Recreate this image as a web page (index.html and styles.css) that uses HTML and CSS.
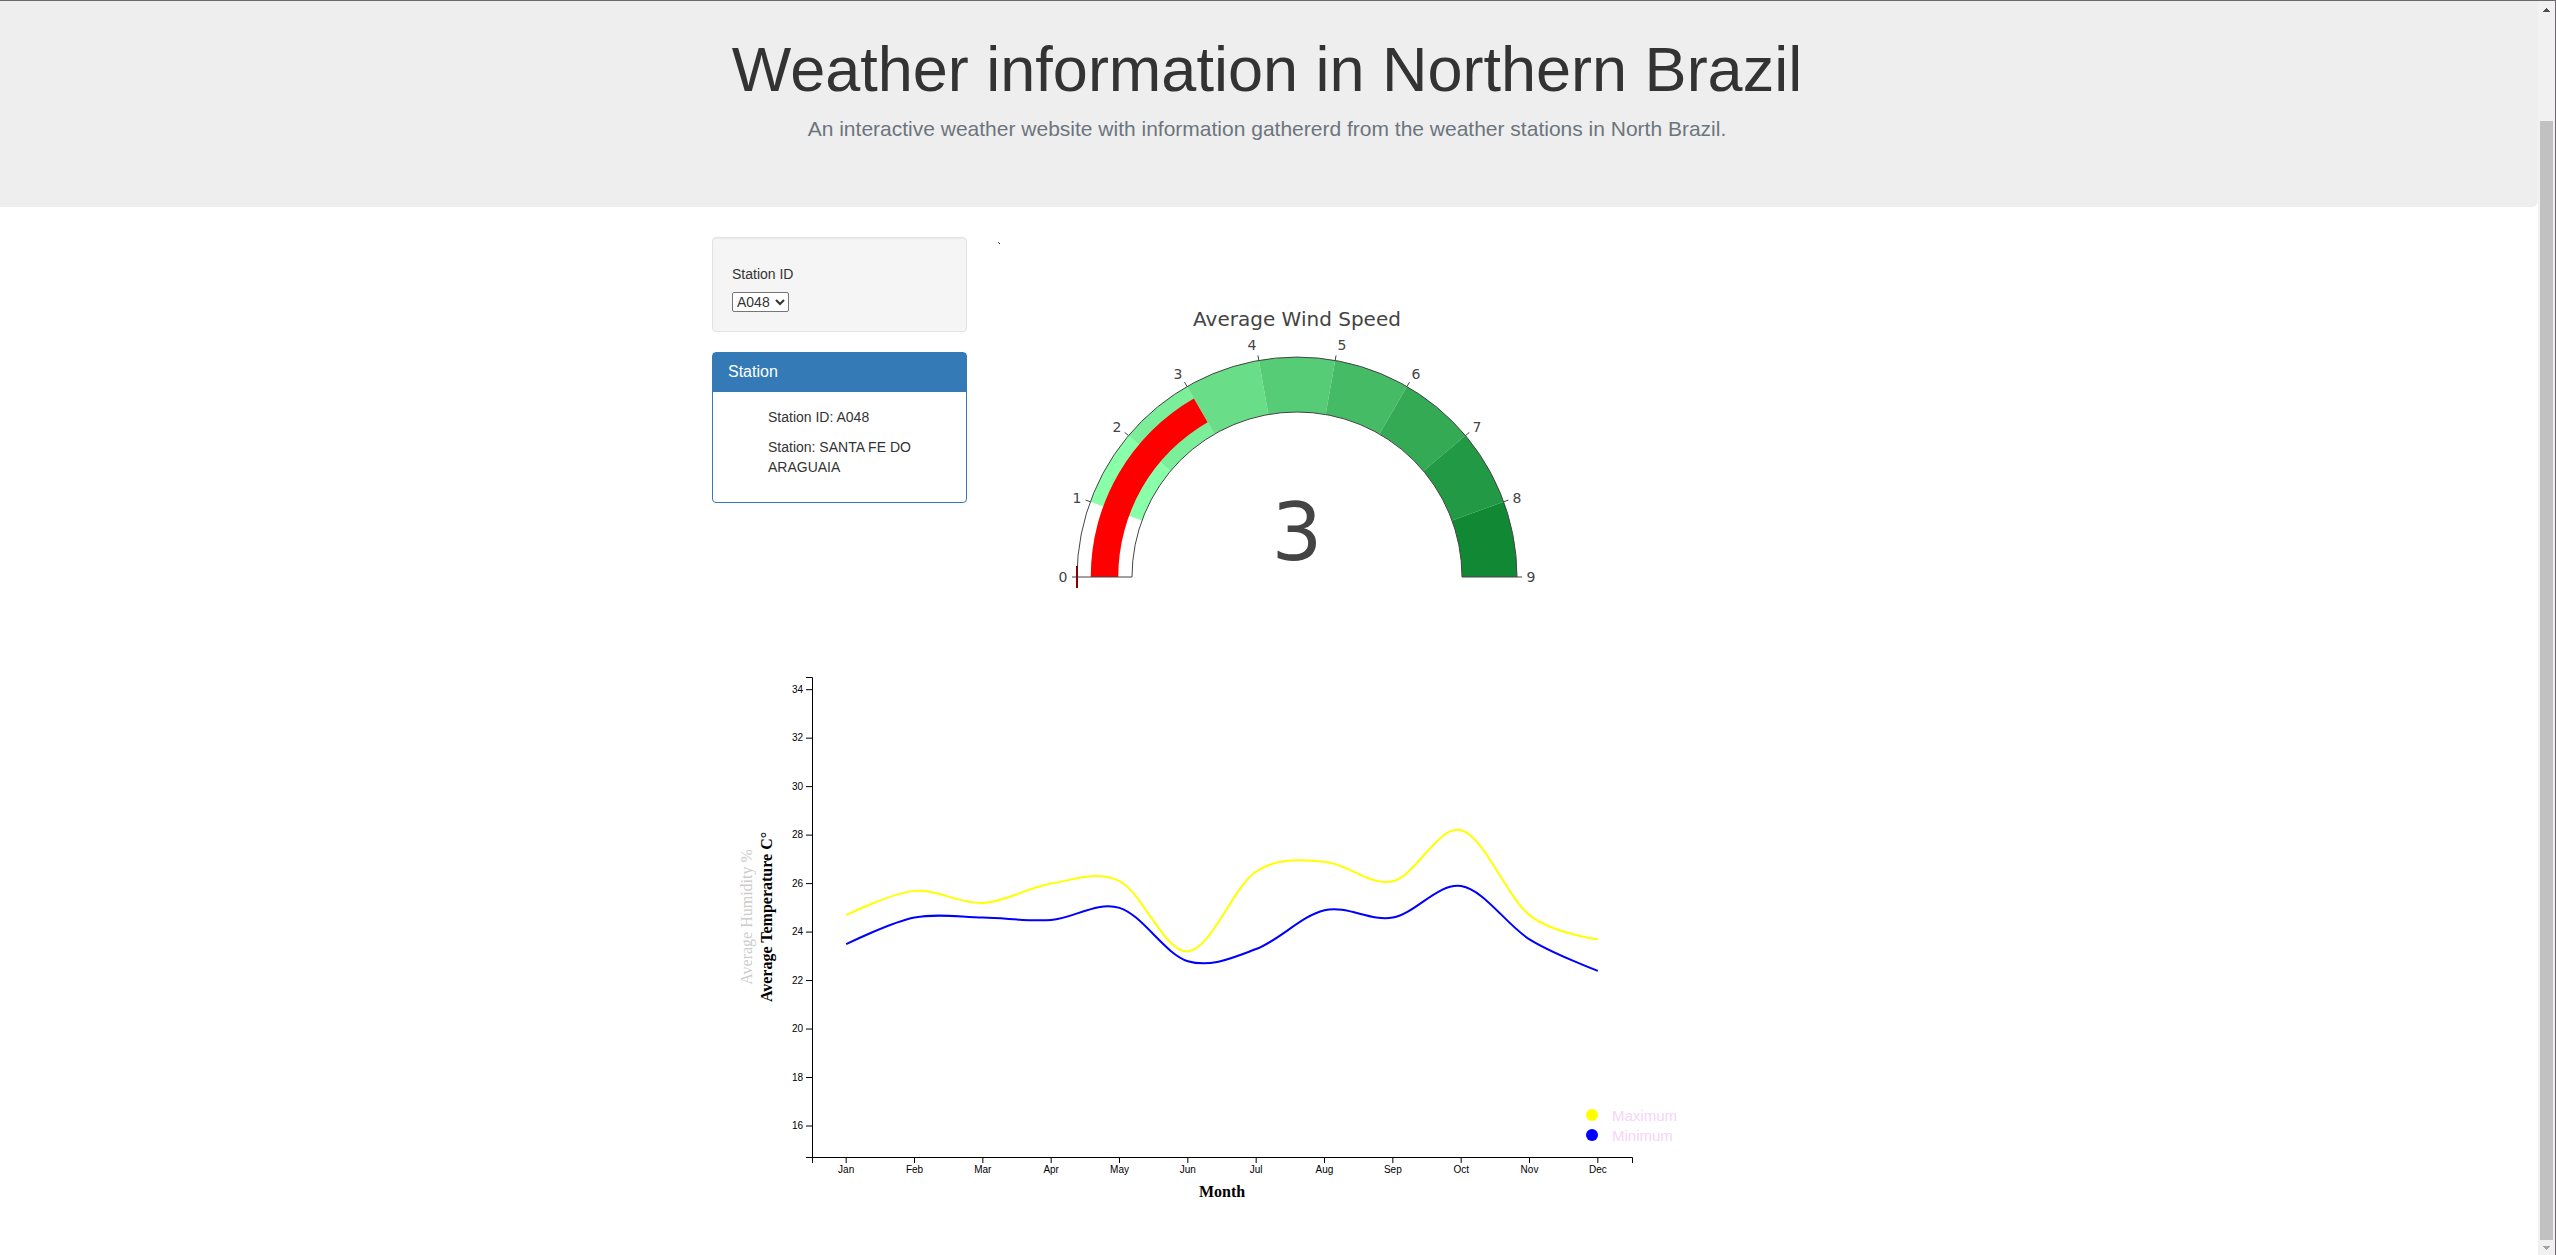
FILE: index.html
```html
<!DOCTYPE html>
<html lang="en">
<head>
<meta charset="utf-8">
<title>Weather information in Northern Brazil</title>
<link rel="stylesheet" href="styles.css">
</head>
<body>
<div class="page">
  <header class="jumbotron">
    <h1>Weather information in Northern Brazil</h1>
    <p>An interactive weather website with information gathererd from the weather stations in North Brazil.</p>
  </header>
  <main class="container">
    <div class="row">
      <aside class="sidebar">
        <form class="well">
          <label for="station">Station ID</label>
          <select id="station"><option>A048</option></select>
        </form>
        <section class="panel">
          <h3 class="panel-heading">Station</h3>
          <div class="panel-body">
            <p>Station ID: A048</p>
            <p>Station: SANTA FE DO ARAGUAIA</p>
          </div>
        </section>
      </aside>
      <div class="gauge-column">
        <svg class="speck" viewBox="0 0 2 2" width="2" height="2"><rect width="1" height="1" fill="#555"/><rect x="1" y="1" width="1" height="1" fill="#222"/></svg>
        <svg id="gauge" class="gauge" viewBox="0 0 600 400" width="600" height="400" role="img" aria-label="Average Wind Speed"></svg>
      </div>
    </div>
    <svg id="chart" class="chart" viewBox="0 0 1000 580" width="1000" height="580" role="img" aria-label="Average temperature by month"></svg>
  </main>
</div>
<div class="scrollbar" aria-hidden="true">
  <svg viewBox="0 0 7 4" width="7" height="4"><path d="M3 0h1v1h1v1h1v1h1v1H0V3h1V2h1V1h1z" fill="#505050"/></svg>
  <div class="thumb"></div>
  <svg viewBox="0 0 7 4" width="7" height="4"><path d="M0 0h7v1H6v1H5v1H4v1H3V3H2V2H1V1H0z" fill="#a3a3a3"/></svg>
</div>
<script src="charts.js"></script>
</body>
</html>
```
FILE: styles.css
```css
* { box-sizing: border-box; }
body {
  margin: 0;
  min-height: 100vh;
  display: flex;
  border-top: 1px solid #6b696b;
  background: #fff;
  color: #333;
  font: 14px/20px "Liberation Sans", Arial, sans-serif;
}
.page { flex: 1; min-width: 0; }
.jumbotron {
  padding: 33px 4px 63px 0;
  margin-bottom: 30px;
  background: #eee;
  border-radius: 0 0 6px 0;
  text-align: center;
}
.jumbotron h1 {
  margin: 0 0 10px;
  font-size: 63px;
  font-weight: 500;
  line-height: 70px;
}
.jumbotron p { margin: 0; font-size: 21px; line-height: 30px; color: #6c757d; }
.container { width: 100%; max-width: 1144px; margin: 0 auto; padding: 0 19px 0 15px; }
.row { display: flex; gap: 30px; }
.sidebar { width: 255px; }
.well {
  margin: 0 0 20px;
  padding: 26px 19px 19px;
  border: 1px solid #e3e3e3;
  border-radius: 4px;
  background: #f5f5f5;
  box-shadow: inset 0 1px 1px rgba(0, 0, 0, .05);
}
.well label { display: block; margin-bottom: 8px; }
.well select {
  display: block;
  height: 20px;
  width: 57px;
  padding: 0;
  font: inherit;
  color: #333;
  background: #fff;
  border: 1px solid #767676;
  border-radius: 2px;
}
.panel { border: 1px solid #337ab7; border-radius: 4px; }
.panel-heading {
  margin: 0;
  padding: 9px 15px 11px;
  background: #337ab7;
  color: #fff;
  font-size: 16px;
  font-weight: 500;
  line-height: 19px;
}
.panel-body { padding: 15px 15px 15px 55px; }
.panel-body p { margin: 0 0 10px; }
.gauge-column { display: flex; flex-direction: column; padding-top: 5px; }
.speck { margin: 0 0 13px 1px; }
.gauge, .chart { display: block; }
.gauge { font-family: Verdana, "DejaVu Sans", sans-serif; fill: #444; text-anchor: middle; }
.gauge-title { font-size: 20px; }
.gauge-tick { font-size: 14px; }
.gauge-value { font-size: 80px; }
.outline { fill: none; stroke: #444; }
.axis { fill: none; stroke: #000; }
.tick-label { font-size: 10px; fill: #000; }
.axis-title { font: 16px "Liberation Serif", "Times New Roman", serif; text-anchor: middle; }
.active { font-weight: 700; fill: #000; }
.inactive { fill: #ccc; }
.legend { font-size: 15px; fill: #f5d5f8; }
.line { fill: none; stroke-width: 2; }
.scrollbar {
  width: 18px;
  display: flex;
  flex-direction: column;
  align-items: center;
  padding: 7px 2px 5px 1px;
  background: #f1f1f1;
  border-right: 1px solid #6b696b;
}
.scrollbar svg { flex: none; }
.thumb { width: 13px; flex: 1; margin: 109px 0 6px; background: #c1c1c1; }
```
FILE: charts.js
```js
const NS = 'http://www.w3.org/2000/svg';

function add(parent, name, attrs, text) {
  const node = document.createElementNS(NS, name);
  for (const key in attrs) node.setAttribute(key, attrs[key]);
  if (text !== undefined) node.textContent = text;
  parent.appendChild(node);
  return node;
}

// Gauge
const gauge = document.getElementById('gauge');
const cx = 300, cy = 320, outer = 220, inner = 165, max = 9;
const polar = (value, r) => {
  const a = Math.PI * (1 - value / max);
  return [cx + r * Math.cos(a), cy - r * Math.sin(a)];
};
const band = (from, to, r1, r2) =>
  `M${polar(from, r1)}A${r1} ${r1} 0 0 1 ${polar(to, r1)}L${polar(to, r2)}A${r2} ${r2} 0 0 0 ${polar(from, r2)}Z`;
const colors = ['#fff', '#8affaa', '#7aee99', '#69dd88', '#57cc77', '#46bb66', '#34aa55', '#229944', '#118833'];
// Label centres, measured outwards and upwards from the hub
const labels = [[234, 0], [220, 79], [180, 150], [119, 203], [45, 232]];

colors.forEach((fill, i) => add(gauge, 'path', { d: band(i, i + 1, outer, inner), fill }));
add(gauge, 'path', { d: band(0, 3, 206.25, 178.75), fill: 'red' });
add(gauge, 'path', { d: band(0, max, outer, inner), class: 'outline' });
for (let i = 0; i <= max; i++) {
  add(gauge, 'path', { d: `M${polar(i, outer)}L${polar(i, outer + 5)}`, class: 'outline' });
  const [dx, dy] = labels[Math.min(i, max - i)];
  add(gauge, 'text', { x: cx + (i < 5 ? -dx : dx), y: cy - dy + 5, class: 'gauge-tick' }, i);
}
add(gauge, 'path', { d: `M${cx - outer} ${cy - 11}v22`, stroke: '#850000', 'stroke-width': 2 });
add(gauge, 'text', { x: cx, y: 69, class: 'gauge-title' }, 'Average Wind Speed');
add(gauge, 'text', { x: cx, y: 303, class: 'gauge-value' }, 3);

// Temperature chart
const chart = document.getElementById('chart');
const left = 100, top0 = 20, width = 820, height = 480;
const months = ['Jan', 'Feb', 'Mar', 'Apr', 'May', 'Jun', 'Jul', 'Aug', 'Sep', 'Oct', 'Nov', 'Dec'];
const series = [
  ['Maximum', 'yellow', [24.7, 25.7, 25.2, 26, 26.1, 23.2, 26.5, 26.9, 26.1, 28.2, 24.7, 23.7]],
  ['Minimum', 'blue', [23.5, 24.6, 24.6, 24.5, 25, 22.8, 23.3, 24.9, 24.6, 25.9, 23.7, 22.4]]
];
const xAt = i => left + (i + 0.5) * width / 12;
const yAt = v => 469 - (v - 16) * 24.24;

// Cardinal spline through the points
function spline(points) {
  let d = `M${points[0]}`;
  for (let i = 0; i < points.length - 1; i++) {
    const a = points[i], b = points[i + 1];
    const before = points[i - 1] || a, after = points[i + 2] || b;
    const c1 = i ? [a[0] + (b[0] - before[0]) / 6, a[1] + (b[1] - before[1]) / 6] : a;
    const c2 = points[i + 2] ? [b[0] - (after[0] - a[0]) / 6, b[1] - (after[1] - a[1]) / 6] : b;
    d += `C${c1} ${c2} ${b}`;
  }
  return d;
}

add(chart, 'path', { d: `M${left - 6} ${top0 + 0.5}h6.5v${height}h-6.5`, class: 'axis' });
add(chart, 'path', { d: `M${left + 0.5} ${top0 + height + 6}v-5.5h${width}v5.5`, class: 'axis' });
for (let v = 16; v <= 34; v += 2) {
  add(chart, 'path', { d: `M${left - 6} ${yAt(v)}h6`, class: 'axis' });
  add(chart, 'text', { x: left - 9, y: yAt(v) + 3, 'text-anchor': 'end', class: 'tick-label' }, v);
}
months.forEach((m, i) => {
  add(chart, 'path', { d: `M${xAt(i)} ${top0 + height}v6`, class: 'axis' });
  add(chart, 'text', { x: xAt(i), y: top0 + height + 16, 'text-anchor': 'middle', class: 'tick-label' }, m);
});
series.forEach(([name, stroke, data], i) => {
  add(chart, 'path', { d: spline(data.map((v, k) => [xAt(k), yAt(v)])), stroke, class: 'line' });
  add(chart, 'circle', { cx: 880, cy: 458 + i * 20, r: 6, fill: stroke });
  add(chart, 'text', { x: 900, y: 464 + i * 20, class: 'legend' }, name);
});
add(chart, 'text', { transform: 'translate(40 260) rotate(-90)', class: 'axis-title inactive' }, 'Average Humidity %');
add(chart, 'text', { transform: 'translate(60 260) rotate(-90)', class: 'axis-title active' }, 'Average Temperature C°');
add(chart, 'text', { x: left + width / 2, y: 540, class: 'axis-title active' }, 'Month');
```
